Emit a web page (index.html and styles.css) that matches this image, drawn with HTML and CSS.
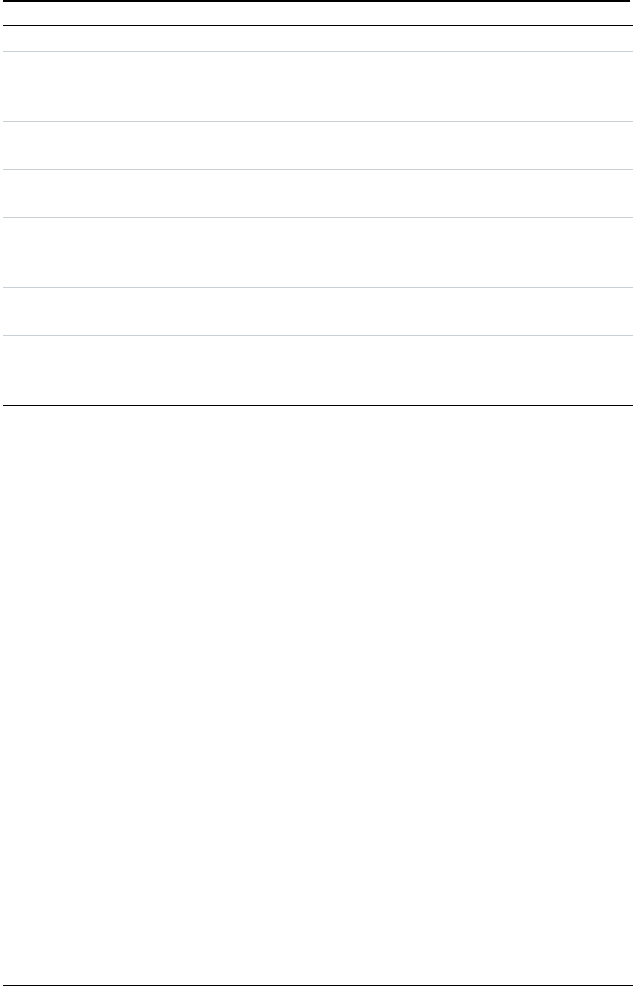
FILE: index.html
```html
<!DOCTYPE html>
<html lang="en">
<head>
  <meta charset="UTF-8" />
  <meta name="viewport" content="width=device-width, initial-scale=1.0"/>
  <title>Sheet</title>
  <link rel="stylesheet" href="styles.css">
</head>
<body>
  <div class="page">
    <!-- Top rule -->
    <div class="top-rule"></div>

    <!-- Table -->
    <div class="sheet">
      <div class="sheet-head"></div>
      <div class="sheet-row row-s"></div>
      <div class="sheet-row row-l"></div>
      <div class="sheet-row row-m"></div>
      <div class="sheet-row row-m"></div>
      <div class="sheet-row row-l"></div>
      <div class="sheet-row row-m"></div>
      <div class="sheet-row row-l last"></div>
    </div>

    <!-- Footer rule -->
    <div class="footer-rule"></div>
  </div>
</body>
</html>
```

FILE: styles.css
```css
html, body {
  margin: 0;
  padding: 0;
  background: #fff;
  font-family: "Liberation Serif", serif;
  overflow: hidden;
}

.page {
  display: flex;
  flex-direction: column;
  height: 987px;
  padding-left: 3px;
  box-sizing: border-box;
}

.top-rule {
  width: 627px;
  height: 2px;
  background: #000;
}

.sheet {
  width: 630px;
}

.sheet-head {
  height: 23px;
  border-bottom: 1px solid #000;
}

.sheet-row {
  border-bottom: 1px solid #c9d1d5;
}

.row-s {
  height: 25px;
}

.row-m {
  height: 47px;
}

.row-l {
  height: 69px;
}

.sheet-row.last {
  border-bottom-color: #000;
}

.footer-rule {
  margin-top: auto;
  margin-bottom: 1px;
  width: 630px;
  height: 1px;
  background: #000;
}
```
